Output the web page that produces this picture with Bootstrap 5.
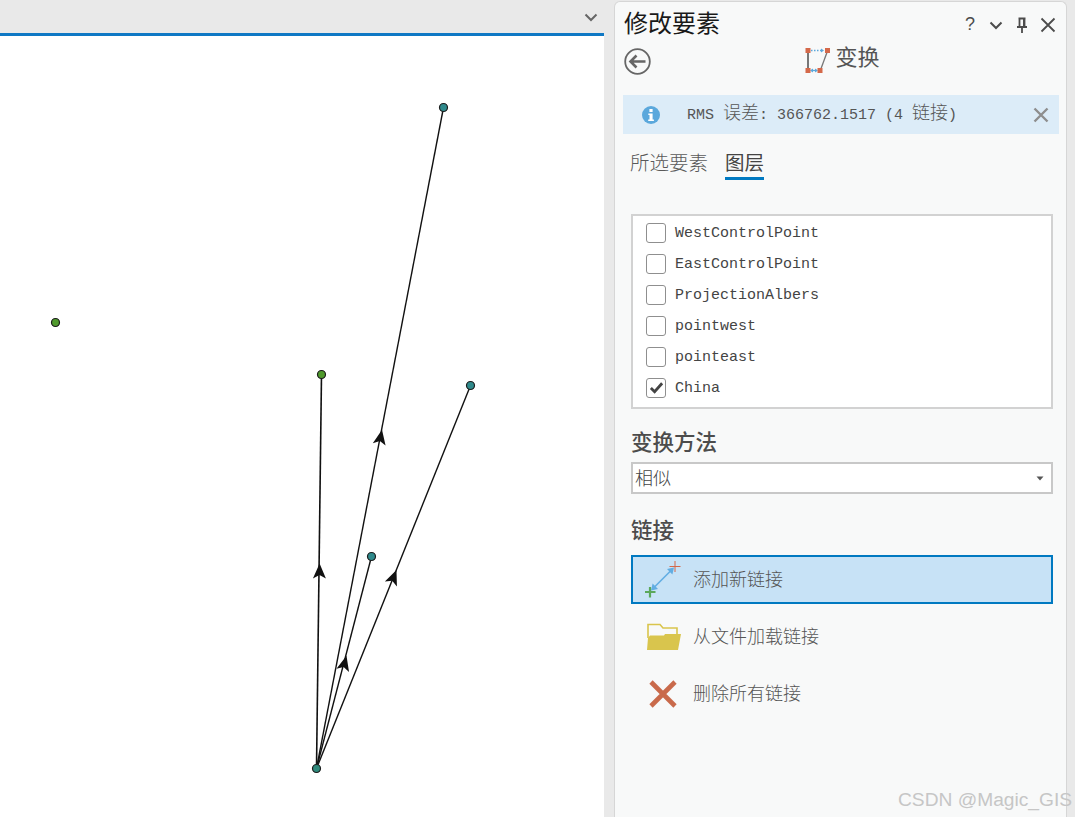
<!DOCTYPE html>
<html lang="zh-CN">
<head>
    <meta charset="UTF-8">
    <meta name="viewport" content="width=device-width, initial-scale=1.0">
    <title>修改要素 - 变换</title>
    <link href="https://cdn.jsdelivr.net/npm/bootstrap@5.3.0/dist/css/bootstrap.min.css" rel="stylesheet">
    <style>
        html, body { height: 100%; }
        body {
            background: #e9e9e9;
            color: #4c4c4c;
            font-family: "Noto Sans CJK SC", "Liberation Sans", sans-serif;
            overflow: hidden;
        }
        .app-shell { width: 1075px; height: 817px; position: relative; }

        /* map side */
        .map-side { width: 604px; flex: none; }
        .map-tabs { height: 33px; padding-right: 5px; }
        .map-canvas { height: 784px; background: #fff; border-top: 3px solid #0f78c4; }
        .map-canvas svg { display: block; }

        /* dock pane */
        .dock-pane {
            width: 453px;
            margin: 1px 8px 0 10px;
            background: #f8f9f9;
            border: 1px solid #d6d6d6;
            border-bottom: 0;
            border-radius: 6px 6px 0 0;
        }
        .pane-head { height: 45px; padding: 0 5px 0 9px; }
        .pane-title { font-size: 24px; line-height: 40px; padding-bottom: 5px; color: #1a1a1a; margin: 0; font-weight: 400; }
        .head-btn { width: 26px; height: 26px; color: #4c4c4c; font: 400 18px "Liberation Sans", sans-serif; }
        .tool-row { height: 30px; padding-left: 9px; }
        .back-icon { margin-bottom: 2px; }
        .tool-name { font-size: 22px; line-height: 24px; color: #555; margin: 0 0 10px 4px; }
        .tool-center { margin-left: -6px; margin-top: -4px; }
        .back-spacer { width: 26px; }

        .rms-bar {
            height: 39px;
            margin: 18px 7px 0 8px;
            padding: 0 10px 0 19px;
            background: #dcecf8;
            border: 0;
            border-radius: 0;
            color: #555;
        }
        .rms-text { margin-left: 27px; padding-bottom: 2px; font: 15px/20px "Liberation Mono", "Noto Sans CJK SC", monospace; white-space: pre; }
        .rms-text span { font-family: "Noto Sans CJK SC", sans-serif; font-size: 18px; font-weight: 300; }

        .pane-tabs { height: 34px; margin: 12px 0 0 15px; gap: 17px; }
        .pane-tab { font-size: 19.5px; line-height: 31px; color: #5a5a5a; font-weight: 300; }
        .pane-tab.active-tab { color: #444; font-weight: 400; border-bottom: 3px solid #0079c1; height: 34px; }

        .layer-box {
            width: 422px;
            height: 195px;
            margin: 34px 0 0 16px;
            padding: 1px 0 0 13px;
            background: #fff;
            border: 2px solid #d2d2d2;
        }
        .layer-row { height: 31px; margin: 0; padding: 0; min-height: 0; }
        .layer-row .form-check-input {
            float: none;
            flex: none;
            width: 20px;
            height: 20px;
            margin: 0;
            border: 1.5px solid #8f8f8f;
            border-radius: 3px;
            background-color: #fff;
            background-size: 15px;
        }
        .layer-row .form-check-input:checked {
            background-color: #fff;
            border-color: #8f8f8f;
            background-image: url("data:image/svg+xml,%3Csvg xmlns='http://www.w3.org/2000/svg' viewBox='0 0 16 16'%3E%3Cpath fill='none' stroke='%23444' stroke-width='3' d='M2 8.5l4 4 8-9'/%3E%3C/svg%3E");
        }
        .layer-row .form-check-label { margin-left: 9px; padding-top: 2px; font: 15px/20px "Liberation Mono", monospace; color: #444; }

        .group-head { height: 30px; line-height: 28px; margin: 18px 0 0 16px; font-size: 21.5px; font-weight: 500; color: #4c4c4c; }
        .method-select {
            width: 422px;
            height: 32px;
            margin: 5px 0 0 16px;
            padding: 0 0 2px 2px;
            font-size: 18px;
            line-height: 26px;
            font-weight: 300;
            color: #444;
            border: 2px solid #c8c8c8;
            border-radius: 0;
            background-position: right 5px center;
            background-size: 12px 12px;
            background-image: url("data:image/svg+xml,%3Csvg xmlns='http://www.w3.org/2000/svg' viewBox='0 0 12 12'%3E%3Cpath fill='%23555' d='M2.5 4.5h7L6 8.5z'/%3E%3C/svg%3E");
        }
        .links-head { margin-top: 21px; }

        .link-action {
            width: 422px;
            height: 49px;
            margin: 8px 0 0 16px;
            padding: 0 0 0 9px;
            border: 2px solid transparent;
            border-radius: 0;
            font-size: 18px;
            font-weight: 300;
            color: #555;
            text-align: left;
            gap: 11px;
        }
        .link-action span { padding-bottom: 2px; }
        .link-action.picked { margin-top: 10px; background: #c7e2f6; border-color: #0079c1; color: #555; }

        .watermark {
            position: absolute;
            left: 898px;
            top: 788px;
            font: 19.2px/24px "Liberation Sans", sans-serif;
            color: #c6c6c6;
            white-space: nowrap;
        }
    </style>
</head>
<body>
    <div class="app-shell d-flex">
        <div class="map-side">
            <div class="map-tabs d-flex justify-content-end align-items-center">
                <svg width="16" height="16" viewBox="0 0 16 16"><path d="M2.5 5.5L8 11l5.5-5.5" fill="none" stroke="#666" stroke-width="2"/></svg>
            </div>
            <div class="map-canvas">
                <svg width="604" height="781" viewBox="-0.5 35.5 604 781">
                    <g stroke="#111" stroke-width="1.4" fill="none">
                        <line x1="316" y1="768" x2="443" y2="107"/>
                        <line x1="316" y1="768" x2="321" y2="374" stroke-width="1.6"/>
                        <line x1="316" y1="768" x2="470" y2="385"/>
                        <line x1="316" y1="768" x2="371" y2="556"/>
                    </g>
                    <g fill="#111">
                        <polygon points="0,-8 6.5,7 0,3.5 -6.5,7" transform="translate(380 437) rotate(10.9)"/>
                        <polygon points="0,-8 6.5,7 0,3.5 -6.5,7" transform="translate(319 571) rotate(0.7)"/>
                        <polygon points="0,-8 6.5,7 0,3.5 -6.5,7" transform="translate(393 577) rotate(21.9)"/>
                        <polygon points="0,-8 6.5,7 0,3.5 -6.5,7" transform="translate(344 663) rotate(14.5)"/>
                    </g>
                    <g stroke="#1c1c1c" stroke-width="1.2">
                        <circle cx="55" cy="322" r="4" fill="#4f9a2c"/>
                        <circle cx="321" cy="374" r="4" fill="#4f9a2c"/>
                        <circle cx="443" cy="107" r="4" fill="#2f8a8c"/>
                        <circle cx="470" cy="385" r="4" fill="#2f8a8c"/>
                        <circle cx="371" cy="556" r="4" fill="#2f8a8c"/>
                        <circle cx="316" cy="768" r="4" fill="#2f8a7c"/>
                    </g>
                </svg>
            </div>
        </div>

        <div class="dock-pane">
            <div class="pane-head d-flex justify-content-between align-items-center">
                <h1 class="pane-title">修改要素</h1>
                <div class="d-flex align-items-center">
                    <span class="head-btn d-flex align-items-center justify-content-center">?</span>
                    <span class="head-btn d-flex align-items-center justify-content-center">
                        <svg width="16" height="16" viewBox="0 0 16 16"><path d="M2.5 5.5L8 11l5.5-5.5" fill="none" stroke="#4c4c4c" stroke-width="2"/></svg>
                    </span>
                    <span class="head-btn d-flex align-items-center justify-content-center">
                        <svg width="12" height="16" viewBox="0 0 12 16"><path d="M2.5 1.5h7M3.5 1.5v8M8.5 1.5v8M1 10h10M6 10v6" fill="none" stroke="#4c4c4c" stroke-width="1.8"/><rect x="7" y="2" width="2" height="7" fill="#4c4c4c"/></svg>
                    </span>
                    <span class="head-btn d-flex align-items-center justify-content-center">
                        <svg width="16" height="16" viewBox="0 0 16 16"><path d="M1.5 1.5l13 13M14.5 1.5l-13 13" fill="none" stroke="#4c4c4c" stroke-width="1.8"/></svg>
                    </span>
                </div>
            </div>

            <div class="tool-row d-flex align-items-center">
                <svg class="back-icon" width="27" height="27" viewBox="0 0 27 27">
                    <circle cx="13.5" cy="13.5" r="12.3" fill="none" stroke="#666" stroke-width="1.8"/>
                    <path d="M21.5 13.5H6.5M12.5 7.5l-6 6 6 6" fill="none" stroke="#666" stroke-width="2.6"/>
                </svg>
                <div class="tool-center flex-grow-1 d-flex justify-content-center align-items-center">
                    <svg width="26" height="26" viewBox="0 0 26 26">
                        <path d="M3 4v19" stroke="#777" stroke-width="2"/>
                        <path d="M22.5 4l-7 19" stroke="#777" stroke-width="1.3"/>
                        <path d="M6 3.500h10" stroke="#5ba8dc" stroke-width="1.300" stroke-dasharray="1.500 1.500"/>
                        <path d="M16 1.500l3 2-3 2zM8 21.500l-3 2 3 2z" fill="#5ba8dc"/>
                        <path d="M6 23.500h6" stroke="#5ba8dc" stroke-width="1.300"/>
                        <path d="M10 21.500l3 2-3 2z" fill="#5ba8dc"/>
                        <g fill="#d4694a">
                            <rect x="0.5" y="1" width="5" height="5"/>
                            <rect x="20" y="1" width="5" height="5"/>
                            <rect x="0.5" y="21" width="5" height="5"/>
                            <rect x="12.5" y="21" width="5" height="5"/>
                        </g>
                    </svg>
                    <span class="tool-name">变换</span>
                </div>
                <span class="back-spacer"></span>
            </div>

            <div class="rms-bar alert d-flex align-items-center mb-0" role="alert">
                <svg width="18" height="18" viewBox="0 0 18 18" class="flex-none">
                    <circle cx="9" cy="9" r="9" fill="#5ba8dc"/>
                    <rect x="7.4" y="3" width="3.2" height="3" fill="#fff"/>
                    <path d="M6.3 7.5h4.3v6h1.3v1.6H6.2v-1.6h1.3V9H6.3z" fill="#fff"/>
                </svg>
                <div class="rms-text flex-grow-1">RMS <span>误差</span>: 366762.1517 (4 <span>链接</span>)</div>
                <svg width="16" height="16" viewBox="0 0 16 16"><path d="M1.5 1.5l13 13M14.5 1.5l-13 13" fill="none" stroke="#8e8e8e" stroke-width="2.4"/></svg>
            </div>

            <div class="pane-tabs d-flex">
                <div class="pane-tab">所选要素</div>
                <div class="pane-tab active-tab">图层</div>
            </div>

            <div class="layer-box">
                <div class="layer-row form-check d-flex align-items-center"><input class="form-check-input" type="checkbox" id="lyr1"><label class="form-check-label" for="lyr1">WestControlPoint</label></div>
                <div class="layer-row form-check d-flex align-items-center"><input class="form-check-input" type="checkbox" id="lyr2"><label class="form-check-label" for="lyr2">EastControlPoint</label></div>
                <div class="layer-row form-check d-flex align-items-center"><input class="form-check-input" type="checkbox" id="lyr3"><label class="form-check-label" for="lyr3">ProjectionAlbers</label></div>
                <div class="layer-row form-check d-flex align-items-center"><input class="form-check-input" type="checkbox" id="lyr4"><label class="form-check-label" for="lyr4">pointwest</label></div>
                <div class="layer-row form-check d-flex align-items-center"><input class="form-check-input" type="checkbox" id="lyr5"><label class="form-check-label" for="lyr5">pointeast</label></div>
                <div class="layer-row form-check d-flex align-items-center"><input class="form-check-input" type="checkbox" id="lyr6" checked><label class="form-check-label" for="lyr6">China</label></div>
            </div>

            <div class="group-head">变换方法</div>
            <select class="method-select form-select">
                <option>相似</option>
            </select>

            <div class="group-head links-head">链接</div>
            <button type="button" class="link-action picked btn d-flex align-items-center">
                <svg width="40" height="40" viewBox="-1 1 40 40">
                    <path d="M29.5 10L9.5 30" stroke="#62ade2" stroke-width="1.6"/>
                    <path d="M31 8.5l-7 1.6 5.4 5.4zM8 31.500l7-1.600-5.400-5.400z" fill="#62ade2"/>
                    <path d="M26.500 7.500h11M32 2v11" stroke="#d4694a" stroke-width="1"/>
                    <path d="M2 33h10.500M7 28v10.500" stroke="#5ba85a" stroke-width="2.200"/>
                </svg>
                <span>添加新链接</span>
            </button>
            <button type="button" class="link-action btn d-flex align-items-center">
                <svg width="40" height="40" viewBox="-5 -6 40 40">
                    <path d="M1 15V1.500h12l3 3.500h14v6" fill="none" stroke="#d9c54d" stroke-width="1.600"/>
                    <path d="M1 15l2-2.500h14l1-1.500h16l-3 16H0z" fill="#d9c54d"/>
                </svg>
                <span>从文件加载链接</span>
            </button>
            <button type="button" class="link-action btn d-flex align-items-center">
                <svg width="40" height="40" viewBox="0 0 40 40">
                    <path d="M9 8l24 24M33 8L9 32" fill="none" stroke="#c96a4b" stroke-width="4.600"/>
                </svg>
                <span>删除所有链接</span>
            </button>
        </div>

        <div class="watermark">CSDN @Magic_GIS</div>
    </div>

    <script src="https://cdn.jsdelivr.net/npm/bootstrap@5.3.0/dist/js/bootstrap.bundle.min.js"></script>
</body>
</html>
